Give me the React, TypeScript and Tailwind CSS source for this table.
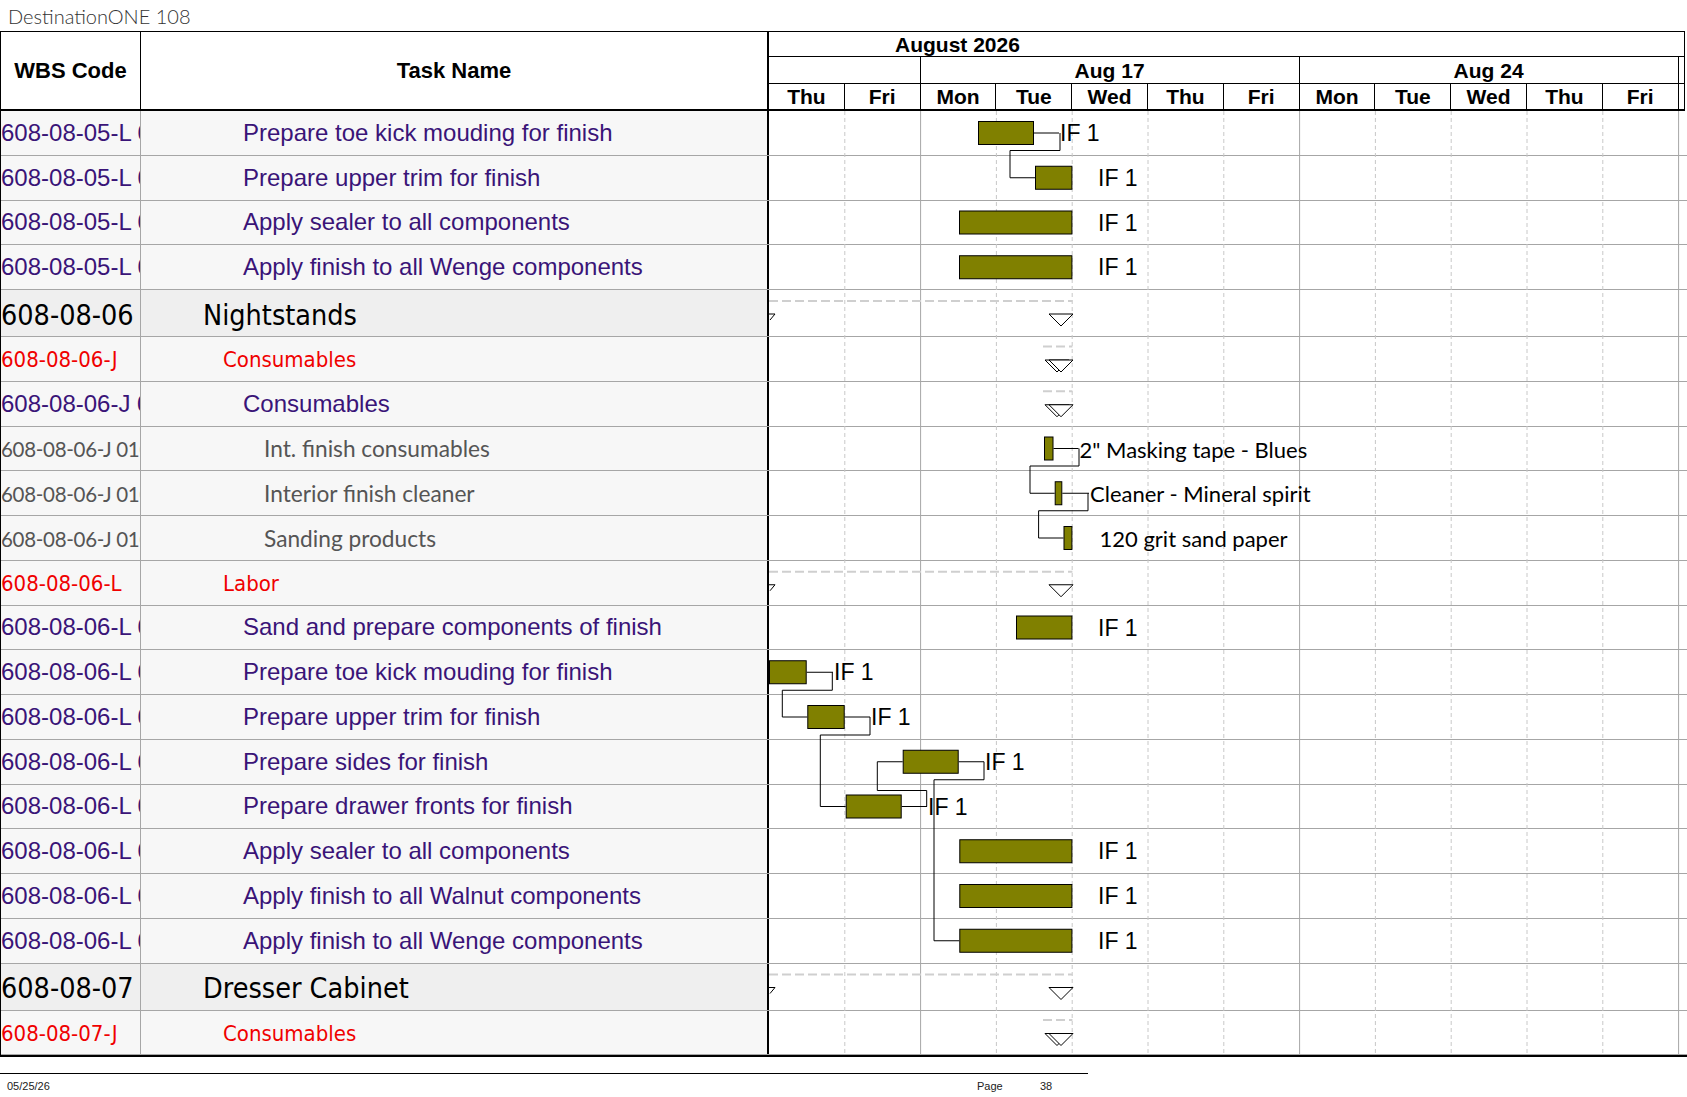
import React from 'react';

type Kind = 'task' | 'summary' | 'group' | 'res';

interface Row {
  kind: Kind;
  wbs: string;
  name: string;
}

const ROWS: Row[] = [
  { kind: 'task', wbs: '608-08-05-L 04', name: 'Prepare toe kick mouding for finish' },
  { kind: 'task', wbs: '608-08-05-L 05', name: 'Prepare upper trim for finish' },
  { kind: 'task', wbs: '608-08-05-L 06', name: 'Apply sealer to all components' },
  { kind: 'task', wbs: '608-08-05-L 07', name: 'Apply finish to all Wenge components' },
  { kind: 'summary', wbs: '608-08-06', name: 'Nightstands' },
  { kind: 'group', wbs: '608-08-06-J', name: 'Consumables' },
  { kind: 'task', wbs: '608-08-06-J 01', name: 'Consumables' },
  { kind: 'res', wbs: '608-08-06-J 0101', name: 'Int. finish consumables' },
  { kind: 'res', wbs: '608-08-06-J 0102', name: 'Interior finish cleaner' },
  { kind: 'res', wbs: '608-08-06-J 0103', name: 'Sanding products' },
  { kind: 'group', wbs: '608-08-06-L', name: 'Labor' },
  { kind: 'task', wbs: '608-08-06-L 01', name: 'Sand and prepare components of finish' },
  { kind: 'task', wbs: '608-08-06-L 02', name: 'Prepare toe kick mouding for finish' },
  { kind: 'task', wbs: '608-08-06-L 03', name: 'Prepare upper trim for finish' },
  { kind: 'task', wbs: '608-08-06-L 04', name: 'Prepare sides for finish' },
  { kind: 'task', wbs: '608-08-06-L 05', name: 'Prepare drawer fronts for finish' },
  { kind: 'task', wbs: '608-08-06-L 06', name: 'Apply sealer to all components' },
  { kind: 'task', wbs: '608-08-06-L 07', name: 'Apply finish to all Walnut components' },
  { kind: 'task', wbs: '608-08-06-L 08', name: 'Apply finish to all Wenge components' },
  { kind: 'summary', wbs: '608-08-07', name: 'Dresser Cabinet' },
  { kind: 'group', wbs: '608-08-07-J', name: 'Consumables' },
];

const DAY = 75.8;
const END = 303.4; // end of Tue Aug 18
const ROW_H = 44.75;
const SUM_H = 47;

const tops: number[] = [];
let acc = 0;
ROWS.forEach((r) => {
  tops.push(acc);
  acc += r.kind === 'summary' ? SUM_H : ROW_H;
});
const BODY_H = acc;
const mid = (i: number) => tops[i] + 22;

const BARS = [
  { r: 0, x1: 209, x2: 265 },
  { r: 1, x1: 266, x2: END },
  { r: 2, x1: 190, x2: END },
  { r: 3, x1: 190, x2: END },
  { r: 7, x1: 275, x2: 284.5 },
  { r: 8, x1: 285.7, x2: 293.3 },
  { r: 9, x1: 294.5, x2: END },
  { r: 11, x1: 247, x2: END },
  { r: 12, x1: 0, x2: 37.7 },
  { r: 13, x1: 38.3, x2: 75.7 },
  { r: 14, x1: 133.7, x2: 189.7 },
  { r: 15, x1: 76.7, x2: 132.7 },
  { r: 16, x1: 190.3, x2: END },
  { r: 17, x1: 190.3, x2: END },
  { r: 18, x1: 190.3, x2: END },
];

// gantt labels; lead = x where the short leader line starts
const LABELS: { r: number; x: number; text: string; lead?: number; res?: boolean }[] = [
  { r: 0, x: 291, text: 'IF 1', lead: 265 },
  { r: 1, x: 329, text: 'IF 1' },
  { r: 2, x: 329, text: 'IF 1' },
  { r: 3, x: 329, text: 'IF 1' },
  { r: 7, x: 310.5, text: '2" Masking tape - Blues', lead: 284.5, res: true },
  { r: 8, x: 321, text: 'Cleaner - Mineral spirit', lead: 293.3, res: true },
  { r: 9, x: 330.5, text: '120 grit sand paper', res: true },
  { r: 11, x: 329, text: 'IF 1' },
  { r: 12, x: 65, text: 'IF 1', lead: 37.7 },
  { r: 13, x: 102, text: 'IF 1', lead: 75.7 },
  { r: 14, x: 216, text: 'IF 1', lead: 189.7 },
  { r: 15, x: 159, text: 'IF 1', lead: 132.7 },
  { r: 16, x: 329, text: 'IF 1' },
  { r: 17, x: 329, text: 'IF 1' },
  { r: 18, x: 329, text: 'IF 1' },
];

const LINKS = [
  `M291 ${mid(0)} V${tops[0] + 39.5} H241 V${mid(1)} H266`,
  `M310 ${mid(7)} V${tops[7] + 39.5} H261 V${mid(8)} H285.7`,
  `M319 ${mid(8)} V${tops[8] + 39.5} H269.6 V${mid(9)} H294.5`,
  `M63.3 ${mid(12)} V${tops[12] + 40} H13.3 V${mid(13)} H38.3`,
  `M101 ${mid(13)} V${tops[13] + 40} H51.3 V${mid(15)} H76.7`,
  `M157.7 ${mid(15)} V${tops[15] + 6} H108.3 V${mid(14)} H133.7`,
  `M215 ${mid(14)} V${tops[14] + 40} H165 V${mid(18)} H190.3`,
];

const rowStyle: Record<Kind, { wbs: string; name: string }> = {
  task: {
    wbs: "font-['Liberation_Sans',Arial,sans-serif] text-[24px] text-[#3a1478]",
    name: "pl-[102px] font-['Liberation_Sans',Arial,sans-serif] text-[24px] text-[#3a1478]",
  },
  summary: {
    wbs: "pt-[6px] font-['DejaVu_Sans_Condensed','DejaVu_Sans',sans-serif] text-[28.5px] text-black",
    name: "pt-[6px] pl-[62px] font-['DejaVu_Sans_Condensed','DejaVu_Sans',sans-serif] text-[28.5px] text-black",
  },
  group: {
    wbs: "pt-[2px] font-['DejaVu_Sans_Condensed','DejaVu_Sans',sans-serif] text-[22px] text-[#f00000]",
    name: "pt-[2px] pl-[82px] font-['DejaVu_Sans_Condensed','DejaVu_Sans',sans-serif] text-[22px] text-[#f00000]",
  },
  res: {
    wbs: "pt-[2px] font-['Lato',sans-serif] text-[20.5px] tracking-[-0.3px] text-[#555555]",
    name: "pt-[2px] pl-[123px] font-['Lato',sans-serif] text-[22.7px] text-[#555555]",
  },
};

function Triangle({ x, y }: { x: number; y: number }) {
  return <path d={`M${x} ${y} H${x + 24} L${x + 12} ${y + 12} Z`} fill="white" stroke="black" strokeWidth={1} />;
}

function GanttLayer() {
  return (
    <svg
      className="absolute top-0 left-[768px] pointer-events-none"
      width={918}
      height={BODY_H}
      viewBox={`0 0 918 ${BODY_H}`}
    >
      {Array.from({ length: 12 }, (_, k) => {
        const i = k + 1;
        const x = i * DAY;
        const week = i === 2 || i === 7 || i === 12;
        return (
          <line
            key={i}
            x1={x}
            x2={x}
            y1={0}
            y2={BODY_H}
            stroke={week ? '#a6a6a6' : '#c8c8c8'}
            strokeWidth={1}
            strokeDasharray={week ? undefined : '4 3'}
          />
        );
      })}

      {ROWS.map((r, i) => {
        if (r.kind === 'summary' || (r.kind === 'group' && r.name === 'Labor')) {
          const t = tops[i];
          return (
            <g key={i}>
              <line x1={0} x2={END} y1={t + 11} y2={t + 11} stroke="#cfcfcf" strokeWidth={2} strokeDasharray="9 4" />
              <path d={`M0 ${t + 24} H6 L1 ${t + 30}`} fill="none" stroke="black" strokeWidth={1} />
              <Triangle x={280} y={t + 24} />
            </g>
          );
        }
        if (r.name === 'Consumables') {
          const t = tops[i];
          return (
            <g key={i}>
              <line x1={274} x2={END} y1={t + 9.5} y2={t + 9.5} stroke="#cfcfcf" strokeWidth={2} strokeDasharray="9 4" />
              <Triangle x={276} y={t + 23} />
              <Triangle x={280} y={t + 23} />
            </g>
          );
        }
        return null;
      })}

      {LINKS.map((d, i) => (
        <path key={i} d={d} fill="none" stroke="black" strokeWidth={1} />
      ))}

      {LABELS.filter((l) => l.lead !== undefined).map((l, i) => (
        <line key={i} x1={l.lead} x2={l.x - 1} y1={mid(l.r)} y2={mid(l.r)} stroke="black" strokeWidth={1} />
      ))}

      {BARS.map((b, i) => (
        <rect
          key={i}
          x={b.x1 + 0.5}
          y={tops[b.r] + 10.5}
          width={b.x2 - b.x1 - 1}
          height={23}
          fill="#808000"
          stroke="black"
          strokeWidth={1}
        />
      ))}

      {LABELS.map((l, i) => (
        <text
          key={i}
          x={l.x}
          y={tops[l.r] + (l.res ? 31 : 30)}
          fontFamily={l.res ? "Lato, sans-serif" : "'Liberation Sans', Arial, sans-serif"}
          fontSize={l.res ? 22 : 23}
          fill="black"
        >
          {l.text}
        </text>
      ))}
    </svg>
  );
}

const DAYS = ['Thu', 'Fri', 'Mon', 'Tue', 'Wed', 'Thu', 'Fri', 'Mon', 'Tue', 'Wed', 'Thu', 'Fri'];

export default function App() {
  return (
    <div className="w-[1687px] h-[1097px] bg-white overflow-hidden font-['Liberation_Sans',Arial,sans-serif] text-black">
      <div className="h-[31px] pl-[8px] flex items-center font-['Lato',sans-serif] font-light text-[20px] text-[#333333]">
        DestinationONE 108
      </div>

      <div className="border-l border-black">
        {/* header */}
        <div className="flex w-[1684px] h-[80px] border-t border-b-2 border-black font-bold">
          <div className="flex w-[768px] shrink-0 border-r-2 border-black text-[22px]">
            <div className="w-[140px] shrink-0 border-r border-black flex items-center justify-center">WBS Code</div>
            <div className="flex-1 flex items-center justify-center">Task Name</div>
          </div>
          <div className="flex flex-col w-[916px] text-[21px]">
            <div className="h-[25px] border-b border-r border-black flex items-center pl-[126px] leading-none">
              August 2026
            </div>
            <div className="h-[27px] flex border-b border-black leading-none">
              <div className="w-[151.6px] border-r border-black" />
              <div className="w-[379px] border-r border-black flex items-center justify-center">Aug 17</div>
              <div className="w-[379px] border-r border-black flex items-center justify-center">Aug 24</div>
              <div className="flex-1 border-r border-black" />
            </div>
            <div className="flex-1 flex leading-none">
              {DAYS.map((d, i) => (
                <div key={i} className="w-[75.8px] border-r border-black flex items-center justify-center">
                  {d}
                </div>
              ))}
              <div className="flex-1 border-r border-black" />
            </div>
          </div>
        </div>

        {/* body */}
        <div className="relative border-b-2 border-black">
          {ROWS.map((r, i) => {
            const s = rowStyle[r.kind];
            return (
              <div
                key={i}
                className={`flex border-b border-[#a6a6a6] ${r.kind === 'summary' ? 'h-[47px]' : 'h-[44.75px]'}`}
              >
                <div
                  className={`flex w-[768px] shrink-0 border-r-2 border-black ${
                    r.kind === 'summary' ? 'bg-[#efefef]' : 'bg-[#f7f7f7]'
                  }`}
                >
                  <div
                    className={`w-[140px] shrink-0 border-r border-[#a6a6a6] overflow-hidden whitespace-nowrap flex items-center ${s.wbs}`}
                  >
                    {r.wbs}
                  </div>
                  <div className={`flex-1 flex items-center whitespace-nowrap overflow-hidden ${s.name}`}>{r.name}</div>
                </div>
                <div className="flex-1 bg-white" />
              </div>
            );
          })}
          <GanttLayer />
        </div>
      </div>

      {/* footer */}
      <div className="mt-[16px] w-[1088px] border-t border-black">
        <div className="flex h-[24px] items-center pl-[7px] text-[11px] text-[#222]">
          <span className="w-[970px]">05/25/26</span>
          <span className="w-[63px]">Page</span>
          <span>38</span>
        </div>
      </div>
    </div>
  );
}
